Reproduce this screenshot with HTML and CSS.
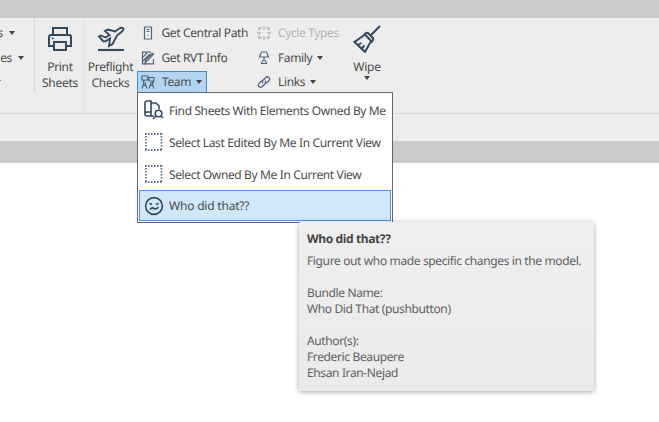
FILE: index.html
```html
<!DOCTYPE html>
<html lang="en">
<head>
<meta charset="utf-8">
<title>Ribbon</title>
<link rel="stylesheet" href="styles.css">
</head>
<body>
<div class="topstrip"></div>
<div class="ribbon">
  <div class="clipped">
    <div class="row"><span>s</span><i class="caret"></i></div>
    <div class="row second"><span>les</span><i class="caret"></i></div>
    <div class="row third"><i class="caret"></i></div>
  </div>
  <div class="big print">
    <svg width="26" height="26" viewBox="0 0 26 26"><path d="M6 9V2h14v7M6 20H2V11q0-2 2-2h18q2 0 2 2v9h-4M7 16h12v8H7z"/><path d="M4.800 12.300h1.600"/></svg>
    <span>Print<br>Sheets</span>
  </div>
  <div class="big flight">
    <svg width="28" height="26" viewBox="0 0 28 26"><path d="M1 24h26" stroke-width="2.100"/><path stroke-width="1.900" d="M2 10.500l2-1 4.500 2 4-2.500-4.500-4 3-1.500 7 2L21.500 3q3-1.800 4.500-1T25 5.500L20 9.500l-4.500 8.500-3.500 2 1-7.500L9 15q-2 .8-3 0z"/></svg>
    <span>Preflight<br>Checks</span>
  </div>
  <div class="stack first">
    <div class="row"><svg width="14" height="14" viewBox="0 0 14 14"><path stroke-width="1.200" d="M3.500 1h7v12h-7zM5.500 3.500h3M5.500 5.500h3M6.500 9.500h1"/></svg><span>Get Central Path</span></div>
    <div class="row"><svg width="14" height="14" viewBox="0 0 14 14"><path stroke-width="1.200" d="M10 1.200H1.500v11.600h11V8M12.500 3L6 10l-2 2.500.5-3.500L11 2.500zM2 6l4-4M2 10l7-7"/></svg><span>Get RVT Info</span></div>
    <div class="row team"><svg width="14" height="14" viewBox="0 0 14 14"><path stroke-width="1.200" d="M.8 1h6v4H4L2.500 6.500V5H.8zM8 2.500h5v3.500h-1V7.500L10.500 6H8zM2.500 8h2v2h-2zM9.500 8h2v2h-2zM1 13.500l1-3h3l1 3M8 13.500l1-3h3l1 3"/></svg><span>Team</span><i class="caret"></i></div>
  </div>
  <div class="stack">
    <div class="row off"><svg width="14" height="14" viewBox="0 0 14 14"><path stroke-width="1.300" d="M2 5V2h3M9 2h3v3M12 9v3H9M5 12H2V9M7 0v4M7 10v4M0 7h4M10 7h4"/></svg><span>Cycle Types</span></div>
    <div class="row"><svg width="14" height="14" viewBox="0 0 14 14"><path stroke-width="1.200" d="M4.500 1h5l2 5h-9zM7 6v3M7 9q-2 .5-2.500 3.500h5Q9 9.500 7 9z"/></svg><span>Family</span><i class="caret"></i></div>
    <div class="row"><svg width="14" height="14" viewBox="0 0 14 14"><path stroke-width="1.300" d="M6 8.300q-1.500-1.500 0-3L9 2.200q1.300-1 2.800.3t.4 3L9.300 8.400M8 5.700q1.500 1.500 0 3l-3 3.100q-1.500 1.200-3-.2t-.2-3l2.800-3"/></svg><span>Links</span><i class="caret"></i></div>
  </div>
  <div class="big wipe">
    <svg width="28" height="28" viewBox="0 0 28 28"><path d="M27 1l-9 9M11.500 9l8 8.500M10 11l2.500-2.500q1.500-1.500 3 0l4 4q1.500 1.500 0 3L17 18M10 11L1.500 17 12 27l5-9M5 20l3.500-2M8.500 23.500l3-3"/></svg>
    <span>Wipe</span>
    <i class="caret"></i>
  </div>
</div>
<div class="subbar"></div>
<div class="band"></div>

<div class="menu">
  <div class="item"><svg width="20" height="20" viewBox="0 0 20 20"><path d="M7 16H3q-2 0-2-2V3q0-2 2-2h4zM1 14q0-2 2-2h4M7 3h5l3 3v3M7 16h3"/><circle cx="14.500" cy="13.500" r="3.300"/><path d="M12 16l-3 3M17 16l2 2"/></svg><span>Find Sheets With Elements Owned By Me</span></div>
  <div class="item"><svg width="20" height="20" viewBox="0 0 20 20"><path class="dots" d="M1 2h17.600M1 18h17.600M2 1v18M17.500 1v18"/></svg><span>Select Last Edited By Me In Current View</span></div>
  <div class="item"><svg width="20" height="20" viewBox="0 0 20 20"><path class="dots" d="M1 2h17.600M1 18h17.600M2 1v18M17.500 1v18"/></svg><span>Select Owned By Me In Current View</span></div>
  <div class="item active"><svg width="20" height="20" viewBox="0 0 20 20"><circle cx="10" cy="10" r="8.400"/><path d="M5.500 7.500l2.500 1M14.500 7.500l-2.500 1M6 13.500q2-2.500 4-1t4.500-1.500"/></svg><span>Who did that??</span></div>
</div>

<div class="tip">
  <b>Who did that??</b>
  <p class="lead">Figure out who made specific changes in the model.</p>
  <p>Bundle Name:<br>Who Did That (pushbutton)</p>
  <p>Author(s):<br>Frederic Beaupere<br>Ehsan Iran-Nejad</p>
</div>
</body>
</html>
```
FILE: styles.css
```css
* { box-sizing: border-box; }
body {
  margin: 0;
  width: 659px;
  height: 422px;
  overflow: hidden;
  position: relative;
  background: #fff;
  color: #4b4b4b;
  font: 12px/16px "Noto Sans", "Open Sans", sans-serif;
  letter-spacing: -.37px;
  text-rendering: geometricPrecision;
  white-space: nowrap;
}
svg { fill: none; stroke: #34495e; stroke-width: 2; flex: none; }
.topstrip { height: 18px; background: #cbcbcb; }
.ribbon {
  display: flex;
  height: 96px;
  background: #ededed;
  border-bottom: 1px solid #d9d9d9;
}
.caret {
  border: 3px solid transparent;
  border-top: 4px solid #444;
  border-bottom: 0;
  flex: none;
}
.clipped {
  width: 35px;
  height: 75px;
  padding-top: 4px;
  display: flex;
  flex-direction: column;
  gap: 2.5px;
  border-right: 1px solid #d6d6d6;
  overflow: hidden;
}
.row { height: 22px; display: flex; align-items: center; }
.clipped .row { justify-content: flex-end; gap: 6px; padding-right: 19px; }
.clipped .second { padding-right: 10px; }
.clipped .third { padding-right: 33px; }
.big { display: flex; flex-direction: column; align-items: center; text-align: center; }
.print { width: 49px; padding: 8px 0 0 2px; border-right: 1px solid #e3e3e3; }
.print span, .flight span { margin-top: 7px; letter-spacing: -.3px; }
.flight { width: 53px; padding-top: 8px; }
.stack { display: flex; flex-direction: column; gap: 2.5px; padding-top: 4px; width: 98px; }
.stack.first { width: 116px; }
.stack .row { padding-left: 4px; gap: 7px; }
.stack svg { stroke: #53657b; }
.stack.first .row:not(.team) span { margin-left: -.5px; }
.team {
  width: 70px;
  border: 1px solid #3f8ddd;
  background: #b3d5f2;
}
.stack.first .team { padding-left: 3px; }
.stack .caret { margin-left: -2px; }
.off { color: #b5b5b5; }
.stack .off svg { stroke: #b5b5b5; }
.wipe { width: 32px; padding-top: 7px; }
.wipe span { margin-top: 6px; letter-spacing: -.2px; }
.wipe .caret { margin-top: 1px; }
.subbar { height: 27px; background: #ededed; }
.band { height: 22px; background: #cbcbcb; }

.menu {
  position: absolute;
  left: 137px;
  top: 92px;
  width: 256px;
  height: 131px;
  padding: 1px;
  border: 1px solid #666;
  background: #fff;
}
.item { height: 32px; padding-left: 5px; display: flex; align-items: center; gap: 5px; }
.item span { padding-top: 1px; }
.item svg { stroke-width: 1.6; }
.item .dots { stroke: #66758a; stroke-width: 1.8; stroke-dasharray: 1.6 1.4; }
.item.active { height: 31px; padding-left: 4px; border: 1px solid #4795df; background: #d1e8f8; letter-spacing: -.2px; }

.tip {
  position: absolute;
  left: 299px;
  top: 222px;
  width: 295px;
  height: 169px;
  padding: 9px 8px;
  border-radius: 2px;
  background: linear-gradient(#efefef, #eaeaea);
  box-shadow: 0 1px 5px rgba(0, 0, 0, .35);
  color: #606060;
}
.tip b { display: block; color: #444; }
.tip p { margin: 0 0 16px; }
.tip .lead { margin-top: 6px; }
```
